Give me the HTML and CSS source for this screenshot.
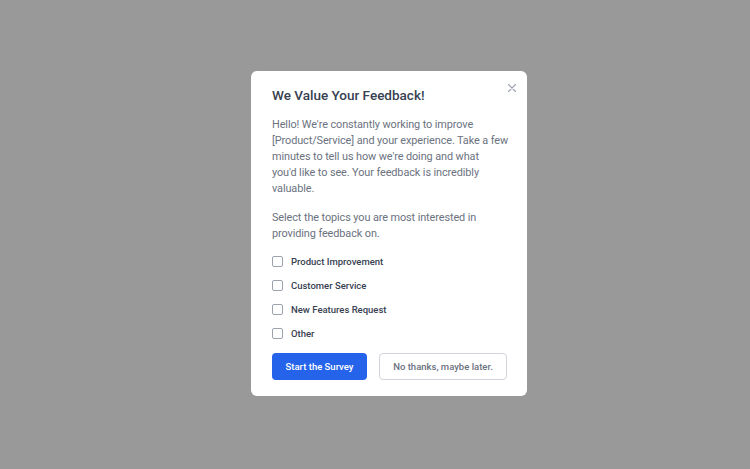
FILE: index.html
```html
<!DOCTYPE html>
<html>
<head>
<meta charset="utf-8">
<link rel="stylesheet" href="styles.css">
</head>
<body>
<div class="overlay">
  <div class="modal">
    <button class="close" aria-label="Close">
      <svg width="8" height="8" viewBox="0 0 8 8"><path d="M0.5 0.5L7.5 7.5M7.5 0.5L0.5 7.5" stroke="#9ca3af" stroke-width="1.1" stroke-linecap="round"/></svg>
    </button>
    <h2 class="title">We Value Your Feedback!</h2>
    <p class="text">Hello! We're constantly working to improve [Product/Service] and your experience. Take a few minutes to tell us how we're doing and what<br>you'd like to see. Your feedback is incredibly valuable.</p>
    <p class="text second">Select the topics you are most interested in providing feedback on.</p>
    <ul class="options">
      <li><span class="box"></span><span class="label">Product Improvement</span></li>
      <li><span class="box"></span><span class="label">Customer Service</span></li>
      <li><span class="box"></span><span class="label">New Features Request</span></li>
      <li><span class="box"></span><span class="label">Other</span></li>
    </ul>
    <div class="actions">
      <button class="btn primary">Start the Survey</button>
      <button class="btn secondary">No thanks, maybe later.</button>
    </div>
  </div>
</div>
</body>
</html>
```
FILE: styles.css
```css
html, body {
  margin: 0;
  padding: 0;
  height: 100%;
}
body {
  background: #999999;
  font-family: Roboto, "Open Sans", sans-serif;
}
.overlay {
  height: 469px;
  display: flex;
  padding-top: 71px;
  padding-left: 251px;
  box-sizing: border-box;
}
.modal {
  position: relative;
  width: 276px;
  height: 325px;
  box-sizing: border-box;
  background: #ffffff;
  border-radius: 6px;
  padding: 14px 18px 16px 21px;
  align-self: flex-start;
}
.close {
  position: absolute;
  top: 11px;
  right: 9px;
  width: 12px;
  height: 12px;
  padding: 0;
  border: 0;
  background: none;
  display: flex;
  align-items: center;
  justify-content: center;
}
.title {
  margin: 0;
  font-size: 13.5px;
  line-height: 20px;
  font-weight: 500;
  color: #374151;
}
.text {
  margin: 12px 0 0 0;
  font-size: 10.9px;
  letter-spacing: -0.1px;
  line-height: 16px;
  color: #6b7280;
}
.text.second {
  margin-top: 13px;
}
.options {
  list-style: none;
  margin: 7px 0 0 0;
  padding: 0;
}
.options li {
  display: flex;
  align-items: center;
  height: 24px;
}
.box {
  width: 9px;
  height: 9px;
  border: 1px solid #9ca3af;
  border-radius: 2px;
  margin-right: 8px;
}
.label {
  font-size: 9.5px;
  font-weight: 500;
  color: #374151;
}
.actions {
  display: flex;
  gap: 12px;
  margin-top: 8px;
}
.btn {
  font-family: inherit;
  font-size: 9.5px;
  font-weight: 500;
  height: 27px;
  border-radius: 4px;
  padding: 0;
}
.primary {
  width: 95px;
  background: #2563eb;
  color: #ffffff;
  border: 0;
}
.secondary {
  width: 128px;
  background: #ffffff;
  color: #6b7280;
  border: 1px solid #d1d5db;
}
```
